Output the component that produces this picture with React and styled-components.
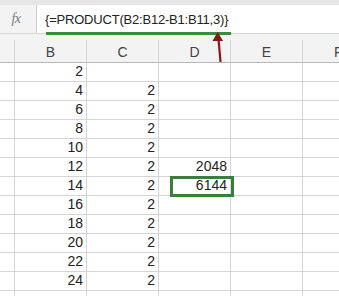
import React from "react";
import styled, { createGlobalStyle } from "styled-components";

const Global = createGlobalStyle`
  html, body { margin: 0; padding: 0; background: #ffffff; overflow: hidden; }
  body { font-family: "Liberation Sans", Arial, sans-serif; }
`;

const Page = styled.div`
  position: relative;
  width: 339px;
  height: 296px;
  overflow: hidden;
  background: #ffffff;
`;

const TopStrip = styled.div`
  height: 5px;
  background: #e6e6e6;
`;

const FormulaBar = styled.div`
  display: flex;
  height: 29px;
  background: #f3f3f3;
  border-bottom: 1px solid #d6d6d6;
  box-sizing: border-box;
`;

const FxBox = styled.div`
  width: 36px;
  display: flex;
  align-items: center;
  justify-content: center;
  padding-right: 4px;
  box-sizing: border-box;
  font-family: "Liberation Serif", "Times New Roman", serif;
  font-style: italic;
  font-size: 14px;
  color: #7a7a7a;
  letter-spacing: -0.5px;
`;

const FormulaInput = styled.div`
  flex: 1;
  background: #ffffff;
  border-left: 1px solid #d0d0d0;
  display: flex;
  align-items: center;
  padding-left: 8px;
  font-size: 13px;
  letter-spacing: -0.2px;
  color: #222;
`;

const Gap = styled.div`
  height: 6px;
  background: #f3f3f3;
`;

const Grid = styled.div`
  display: grid;
  grid-template-columns: 15px 72px 72px 72px 72px 1fr;
`;

const HeaderCell = styled.div`
  height: 23px;
  box-sizing: border-box;
  background: #f3f3f3;
  border-right: 1px solid #d4d4d4;
  border-bottom: 1px solid #b8b8b8;
  display: flex;
  align-items: center;
  justify-content: ${(p) => (p.$edge ? "flex-start" : "center")};
  padding-left: ${(p) => (p.$edge ? "31px" : "0")};
  font-size: 14px;
  color: #444;
  padding-top: 1px;
`;

const Cell = styled.div`
  height: 19px;
  box-sizing: border-box;
  border-right: 1px solid #d4d4d4;
  border-bottom: 1px solid #d4d4d4;
  display: flex;
  align-items: flex-end;
  justify-content: flex-end;
  padding-right: 3px;
  padding-bottom: 1px;
  font-size: 14px;
  line-height: 17px;
  color: #222;
`;

const Selection = styled.div`
  position: absolute;
  left: 170px;
  top: 176px;
  width: 64px;
  height: 21px;
  box-sizing: border-box;
  border: 3px solid #3b7d3b;
`;

const Underline = styled.div`
  position: absolute;
  left: 46px;
  top: 32px;
  width: 185px;
  height: 3px;
  background: #3d8a3d;
`;

const Arrow = styled.svg`
  position: absolute;
  left: 210px;
  top: 30px;
`;

const cols = ["A", "B", "C", "D", "E", "F"];
const rows = [
  [2, "", ""],
  [4, 2, ""],
  [6, 2, ""],
  [8, 2, ""],
  [10, 2, ""],
  [12, 2, 2048],
  [14, 2, 6144],
  [16, 2, ""],
  [18, 2, ""],
  [20, 2, ""],
  [22, 2, ""],
  [24, 2, ""],
  ["", "", ""],
];

export default function App() {
  return (
    <Page>
      <Global />
      <TopStrip />
      <FormulaBar>
        <FxBox>fx</FxBox>
        <FormulaInput>{"{=PRODUCT(B2:B12-B1:B11,3)}"}</FormulaInput>
      </FormulaBar>
      <Gap />
      <Grid>
        {cols.map((c, i) => (
          <HeaderCell key={c} $edge={i === 5}>
            {i === 0 ? "" : c}
          </HeaderCell>
        ))}
        {rows.map((r, ri) => (
          <React.Fragment key={ri}>
            <Cell />
            <Cell>{r[0]}</Cell>
            <Cell>{r[1]}</Cell>
            <Cell>{r[2]}</Cell>
            <Cell />
            <Cell />
          </React.Fragment>
        ))}
      </Grid>
      <Underline />
      <Selection />
      <Arrow width="16" height="34" viewBox="0 0 16 34">
        <line x1="8.5" y1="9" x2="10.5" y2="32" stroke="#8b1518" strokeWidth="2.2" />
        <polygon points="7.7,2 2.5,11 13,11" fill="#8b1518" />
      </Arrow>
    </Page>
  );
}
